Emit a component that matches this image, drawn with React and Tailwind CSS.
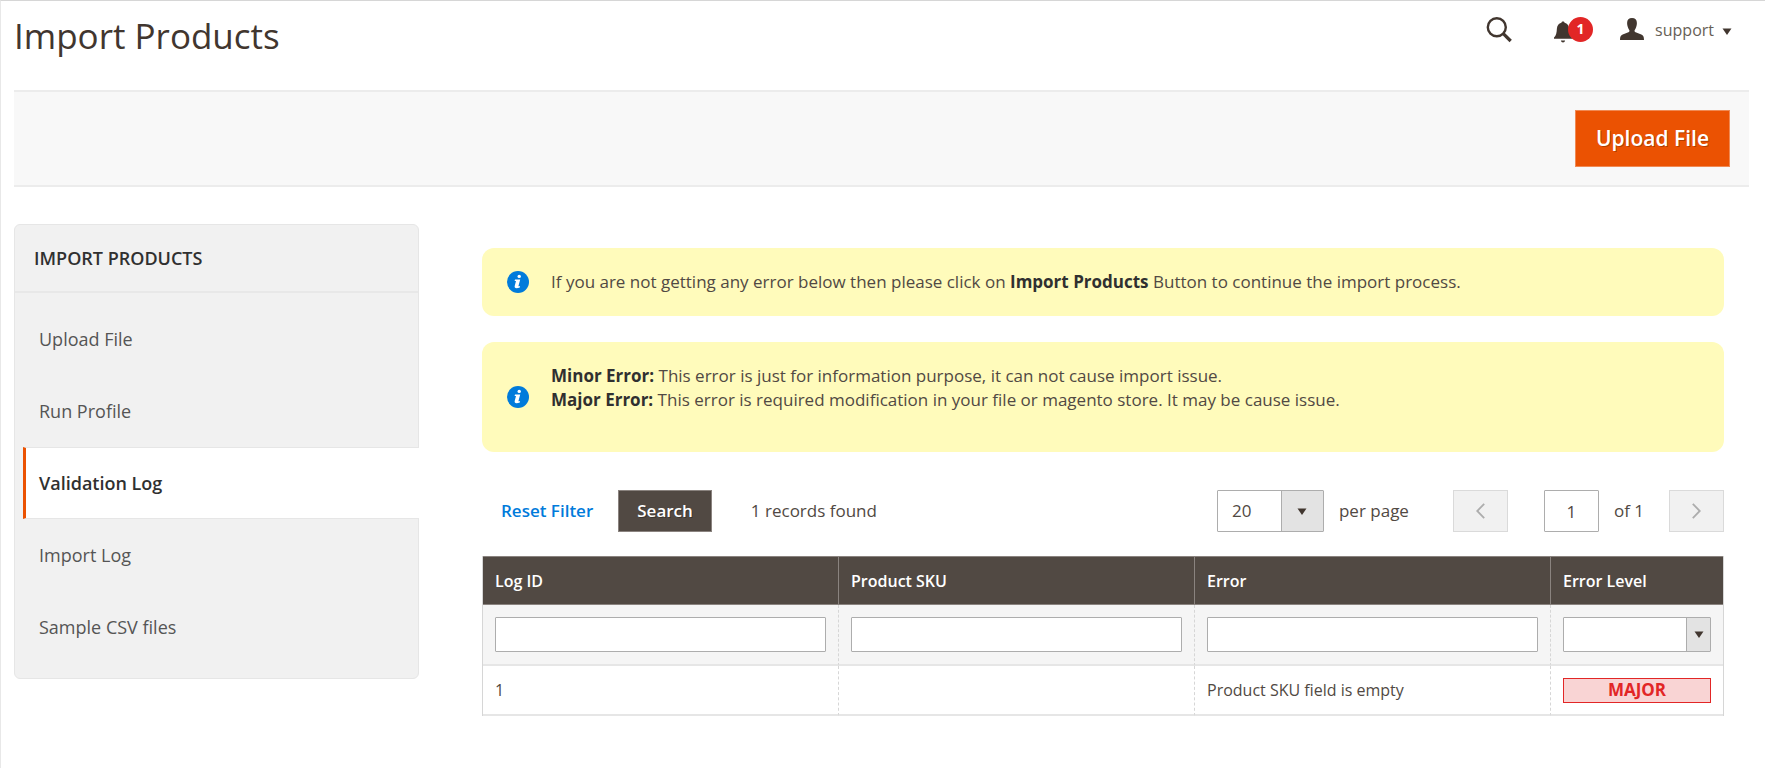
import { useState } from 'react'

const menuItems = ['Upload File', 'Run Profile', 'Validation Log', 'Import Log', 'Sample CSV files']

const logs = [
  { id: 1, sku: '', error: 'Product SKU field is empty', level: 'MAJOR' }
]

const textColumns = [
  { key: 'id', label: 'Log ID' },
  { key: 'sku', label: 'Product SKU' },
  { key: 'error', label: 'Error' }
]

function Caret() {
  return (
    <svg className="w-[10px] h-[7px]" viewBox="0 0 10 7" fill="#41362f">
      <path d="M0.5 0.5h9L5 7z" />
    </svg>
  )
}

function Header() {
  return (
    <header className="flex items-start justify-between pl-[13px] pr-[33px] h-[89px]">
      <h1 className="text-[35px] leading-[46px] mt-3 text-[#41362f]">Import Products</h1>

      <div className="flex items-center h-[57px]">
        <button aria-label="Search" className="mr-[42px]">
          <svg className="w-[26px] h-[26px]" viewBox="0 0 26 26" fill="none" stroke="#41362f">
            <circle cx="10.8" cy="10.3" r="9" strokeWidth="2.4" />
            <path d="M17 16.3l7.7 7.7" strokeWidth="3.2" />
          </svg>
        </button>

        <button aria-label="Notifications" className="relative w-[40px] h-[26px] mr-[26px]">
          <svg className="w-[19px] h-[22px] mt-1" viewBox="0 0 19 22" fill="#41362f">
            <path d="M9 .5c.9 0 1.4.5 1.6 1.2 2.7.6 4.3 2.7 4.5 5.7.2 4.2.8 7.1 2.9 9.2v1.2H0v-1.2c2.1-2.1 2.7-5 2.9-9.2.2-3 1.8-5.1 4.5-5.7C7.6 1 8.100.5 9 .5z" />
            <path d="M6.9 19.4h4.2c-.2 1.2-1 2-2.1 2s-1.900-.8-2.100-2z" />
          </svg>
          <span className="absolute left-[14px] top-0 flex items-center justify-center w-[25px] h-[25px] rounded-full bg-[#e22626] text-white text-sm font-bold">
            1
          </span>
        </button>

        <button className="flex items-center text-base text-[#676056]">
          <svg className="w-[24px] h-[22px] mr-[11px] mb-[2px]" viewBox="0 0 24 22" fill="#41362f">
            <path d="M12 0c3.1 0 4.9 1.8 4.9 4.9 0 1.3-.2 2.7-.7 4.1-.4 1.5-1.3 2.6-1.6 3.3-.2.9.1 1.6 1 2l5.7 2.3c1.9.8 2.7 2.1 2.7 5.4H0c0-3.3.8-4.6 2.7-5.4l5.7-2.3c.9-.4 1.2-1.1 1-2-.3-.7-1.2-1.8-1.6-3.3-.5-1.4-.7-2.8-.7-4.1C7.1 1.8 8.9 0 12 0z" />
          </svg>
          <span className="mr-2">support</span>
          <span className="pt-1">
            <Caret />
          </span>
        </button>
      </div>
    </header>
  )
}

function Sidebar({ active, onSelect }) {
  return (
    <aside className="w-[405px] shrink-0 bg-[#f1f1f1] border border-[#e6e6e6] rounded-md">
      <h2 className="px-[19px] py-[21px] text-lg leading-6 font-semibold text-[#303030] border-b-2 border-[#e8e8e8]">
        IMPORT PRODUCTS
      </h2>
      <ul className="pt-[10px] pb-[15px] pl-2 -mr-px">
        {menuItems.map((item) => (
          <li key={item}>
            <a
              href="#"
              onClick={() => onSelect(item)}
              className={
                item === active
                  ? 'block py-[23px] pl-[13px] text-lg leading-6 font-semibold text-[#303030] bg-white border-y border-y-[#e6e6e6] border-l-[3px] border-l-[#eb5202]'
                  : 'block py-6 pl-4 text-lg leading-6 text-[#555]'
              }
            >
              {item}
            </a>
          </li>
        ))}
      </ul>
    </aside>
  )
}

function Message({ children }) {
  return (
    <div className="flex items-center gap-[22px] pl-[25px] pr-6 bg-[#fffbbb] rounded-xl text-[17px] leading-6 text-[#514943]">
      <svg className="w-[22px] h-[22px] shrink-0" viewBox="0 0 22 22">
        <circle cx="11" cy="11" r="11" fill="#007bdb" />
        <circle cx="12.2" cy="5.4" r="1.7" fill="#fff" />
        <path d="M8 8.5h5.2l-1.8 6.7h1.7l-.3 1.4c-1.3.5-2.3.7-3.3.7-1.5 0-2.1-.9-1.8-2.2l1.3-5.2H7.6z" fill="#fff" />
      </svg>
      {children}
    </div>
  )
}

function Toolbar() {
  return (
    <div className="flex items-center h-[42px] text-[17px] text-[#514943]">
      <button className="ml-[19px] font-semibold text-[#007bdb]">Reset Filter</button>
      <button className="ml-[25px] h-[42px] px-[18px] font-semibold text-white bg-[#514943] border border-[#8a837f] text-shadow-[1px_1px_0_rgba(0,0,0,0.3)]">
        Search
      </button>
      <span className="ml-[39px]">1 records found</span>

      <div className="relative ml-auto w-[107px] h-[42px]">
        <select
          id="limit"
          defaultValue="20"
          className="appearance-none w-full h-full pl-[14px] bg-white border border-[#adadad] rounded-[1px]"
        >
          <option>20</option>
          <option>30</option>
          <option>50</option>
        </select>
        <span className="absolute right-px inset-y-px w-[42px] flex items-center justify-center bg-[#e3e3e3] border-l border-[#adadad] pointer-events-none">
          <Caret />
        </span>
      </div>
      <label htmlFor="limit" className="ml-[15px]">per page</label>

      <button
        disabled
        aria-label="Previous page"
        className="ml-11 w-[55px] h-[42px] flex items-center justify-center bg-[#f1f1f1] border border-[#dadada]"
      >
        <svg className="w-[9px] h-[16px]" viewBox="0 0 9 16" fill="none" stroke="#adadad" strokeWidth="1.8">
          <path d="M8.2.8L1.2 8l7 7.2" />
        </svg>
      </button>
      <input
        aria-label="Page"
        defaultValue="1"
        className="ml-9 w-[55px] h-[42px] text-center bg-white border border-[#adadad] rounded-[1px]"
      />
      <span className="ml-[15px]">of 1</span>
      <button
        disabled
        aria-label="Next page"
        className="ml-[25px] w-[55px] h-[42px] flex items-center justify-center bg-[#f1f1f1] border border-[#dadada]"
      >
        <svg className="w-[9px] h-[16px]" viewBox="0 0 9 16" fill="none" stroke="#adadad" strokeWidth="1.8">
          <path d="M.8.8l7 7.2-7 7.2" />
        </svg>
      </button>
    </div>
  )
}

function LogTable() {
  return (
    <table className="w-full table-fixed border-separate border-spacing-0 border-x border-[#d6d6d6] text-base text-[#514943]">
      <thead>
        <tr className="h-[49px] text-left text-white bg-[#514943]">
          {textColumns.map((col) => (
            <th key={col.key} id={`col-${col.key}`} className="px-3 font-semibold border-y border-r border-[#8a837f]">
              {col.label}
            </th>
          ))}
          <th id="col-level" className="w-[172px] px-3 font-semibold border-y border-[#8a837f]">Error Level</th>
        </tr>
      </thead>
      <tbody>
        <tr className="h-[61px] bg-[#f5f5f5]">
          {textColumns.map((col) => (
            <td key={col.key} className="px-3 border-r border-r-[#d6d6d6] [border-right-style:dashed] border-b-2 border-b-[#e6e6e6]">
              <input
                aria-labelledby={`col-${col.key}`}
                className="block w-full h-[35px] px-2 bg-white border border-[#adadad] rounded-[1px]"
              />
            </td>
          ))}
          <td className="px-3 border-b-2 border-b-[#e6e6e6]">
            <div className="relative h-[35px]">
              <select
                aria-labelledby="col-level"
                className="appearance-none block w-full h-full px-2 bg-white border border-[#adadad] rounded-[1px]"
              >
                <option></option>
              </select>
              <span className="absolute right-px inset-y-px w-6 flex items-center justify-center bg-[#e3e3e3] border-l border-[#adadad] pointer-events-none">
                <Caret />
              </span>
            </div>
          </td>
        </tr>
        {logs.map((log) => (
          <tr key={log.id} className="h-[50px] bg-white">
            {textColumns.map((col) => (
              <td key={col.key} className="px-3 border-r border-r-[#d6d6d6] [border-right-style:dashed] border-b-2 border-b-[#e6e6e6]">
                {log[col.key]}
              </td>
            ))}
            <td className="px-3 border-b-2 border-b-[#e6e6e6]">
              <span className="block h-[25px] leading-[22px] text-center text-[17px] font-bold text-[#e22626] bg-[#f9d4d4] border border-[#e22626]">
                {log.level}
              </span>
            </td>
          </tr>
        ))}
      </tbody>
    </table>
  )
}

function App() {
  const [active, setActive] = useState('Validation Log')

  return (
    <div className="min-h-screen bg-white border-t border-t-[#d6d6d6] border-l border-l-[#e8e8e8] font-['Open_Sans',sans-serif]">
      <Header />

      <div className="flex justify-end ml-[13px] mr-4 py-[18px] pr-[19px] bg-[#f8f8f8] border-y-2 border-[#ececec]">
        <button className="h-[57px] px-5 text-[21px] font-semibold text-white bg-[#eb5202] border border-[#f08a54] text-shadow-[1px_1px_0_rgba(0,0,0,0.25)]">
          Upload File
        </button>
      </div>

      <div className="flex items-start gap-[63px] pl-[13px] pr-[41px] pt-[37px]">
        <Sidebar active={active} onSelect={setActive} />

        <main className="flex-1 min-w-0 pt-6">
          <div className="flex flex-col gap-[26px]">
            <Message>
              <p className="py-[22px]">
                If you are not getting any error below then please click on{' '}
                <strong className="text-[#303030]">Import Products</strong> Button to continue the import process.
              </p>
            </Message>
            <Message>
              <p className="pt-[22px] pb-10">
                <strong className="text-[#303030]">Minor Error:</strong> This error is just for information purpose, it can not cause import issue.
                <br />
                <strong className="text-[#303030]">Major Error:</strong> This error is required modification in your file or magento store. It may be cause issue.
              </p>
            </Message>
          </div>

          <div className="flex flex-col gap-6 mt-[38px]">
            <Toolbar />
            <LogTable />
          </div>
        </main>
      </div>
    </div>
  )
}

export default App
